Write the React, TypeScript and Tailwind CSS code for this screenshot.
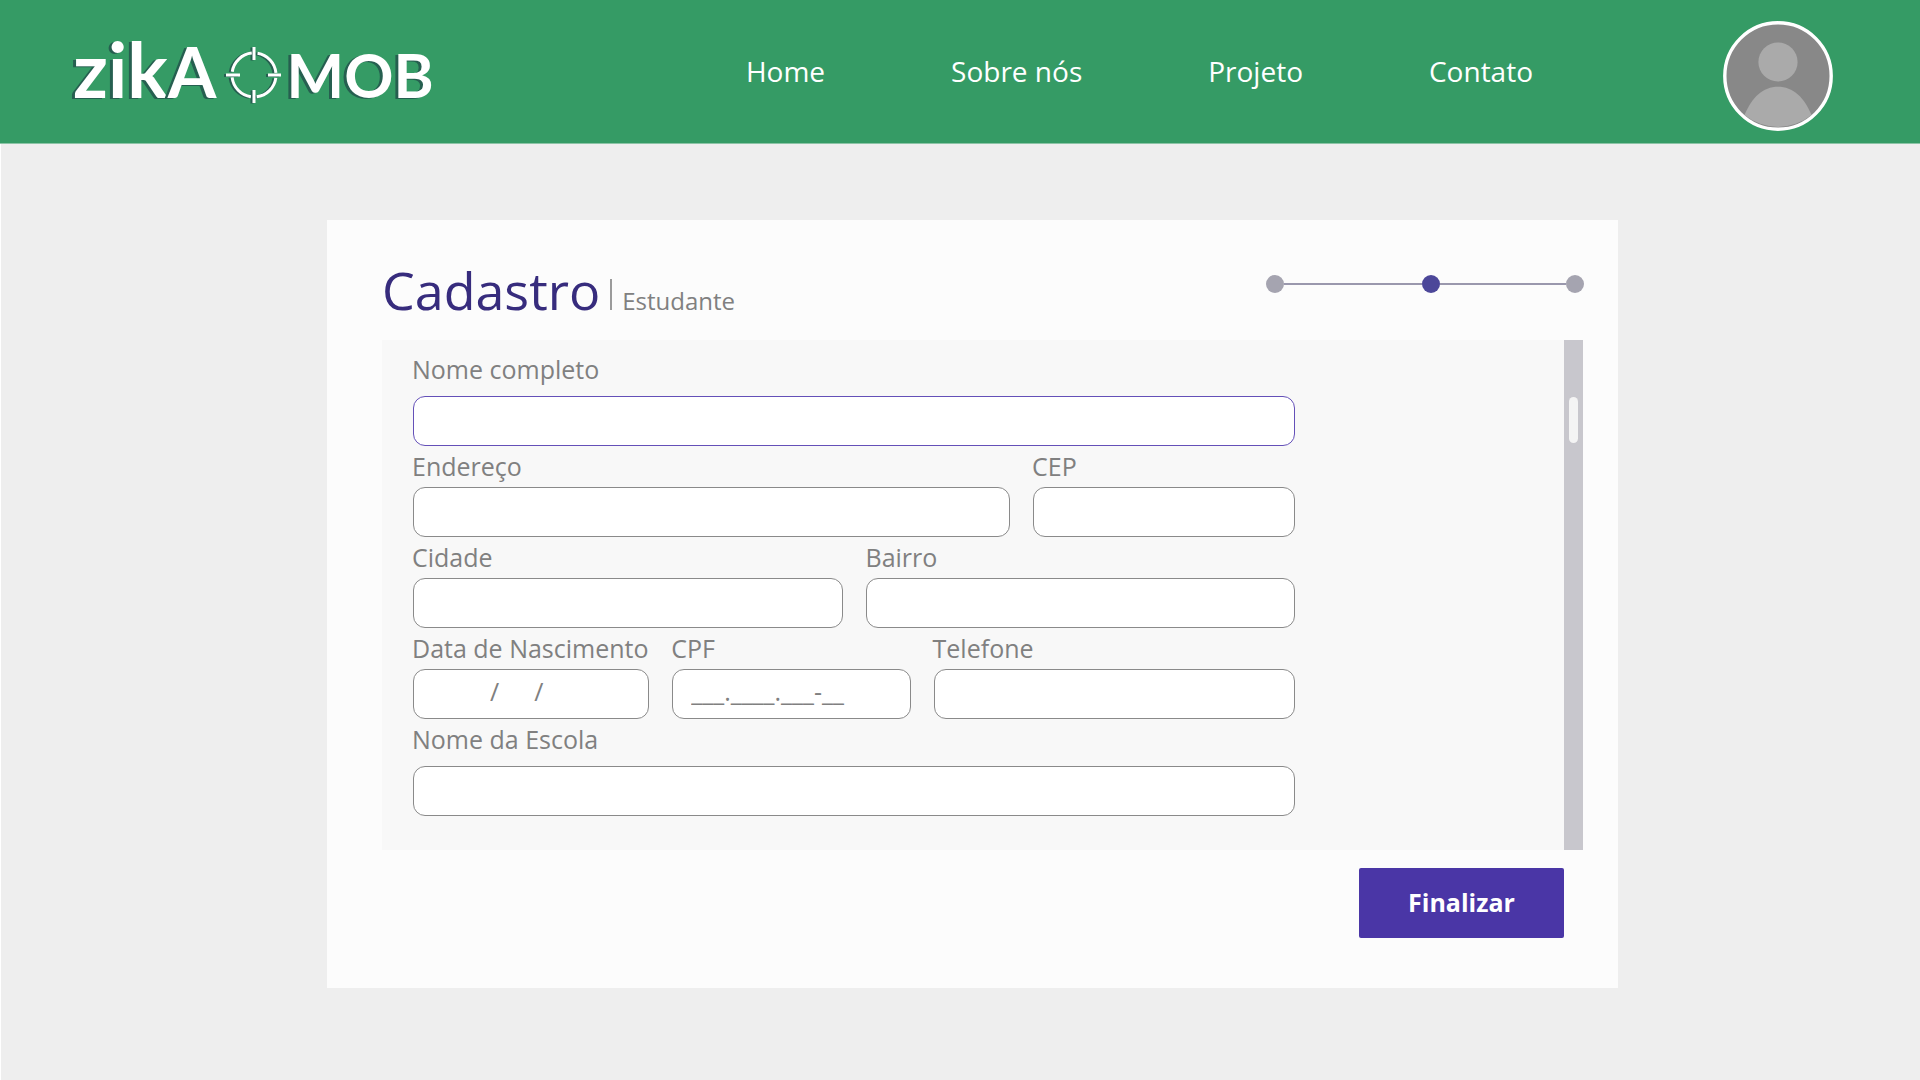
import React from "react";

const NAV_LINKS = ["Home", "Sobre nós", "Projeto", "Contato"];

function Crosshair() {
  const shape = (
    <>
      <circle cx="30" cy="30" r="22" strokeWidth="3" strokeDasharray="28.56 6" strokeDashoffset="-3" />
      <path d="M30 2V15M30 45V58M2 30H16M44 30H57" strokeWidth="3" />
    </>
  );
  return (
    <svg viewBox="0 0 60 60" className="mt-1.5 ml-2 h-15 w-15 shrink-0 self-center" fill="none" aria-hidden="true">
      <g stroke="#265f50" transform="translate(-2 0.5)">{shape}</g>
      <g stroke="#ffffff">{shape}</g>
    </svg>
  );
}

function Logo() {
  return (
    <a
      href="#"
      aria-label="zikA MOB"
      className="flex items-baseline font-['Lato',sans-serif] leading-[80px] font-bold text-white [text-shadow:-3px_1px_0_#265f50]"
    >
      <span className="text-[76px]">zik</span>
      <span className="text-[70px]">A</span>
      <Crosshair />
      <span className="ml-0.5 text-[61px]">MOB</span>
    </a>
  );
}

function Avatar() {
  return (
    <button type="button" aria-label="Perfil" className="mt-[9px] shrink-0 rounded-full">
      <svg viewBox="0 0 110 110" className="h-[110px] w-[110px]" aria-hidden="true">
        <circle cx="55" cy="55" r="53" fill="#888888" />
        <circle cx="55" cy="41" r="19.6" fill="#aaaaaa" />
        <path d="M21.5 94C29 76 40 65.700 55 65.700S81 76 88.500 94A53 53 0 0 1 21.500 94Z" fill="#aaaaaa" />
        <circle cx="55" cy="55" r="53.200" fill="none" stroke="#ffffff" strokeWidth="3.400" />
      </svg>
    </button>
  );
}

function Stepper() {
  return (
    <ol aria-label="Etapa 2 de 3" className="flex w-[318px] items-center">
      <li className="h-[18px] w-[18px] rounded-full bg-[#a5a4b0]" />
      <li aria-hidden="true" className="h-[2px] grow-[138] bg-[#9a98ad]" />
      <li aria-current="step" className="h-[18px] w-[18px] rounded-full bg-[#4c4799]" />
      <li aria-hidden="true" className="h-[2px] grow-[126] bg-[#9a98ad]" />
      <li className="h-[18px] w-[18px] rounded-full bg-[#a5a4b0]" />
    </ol>
  );
}

type FieldProps = {
  id: string;
  label: string;
  placeholder?: string;
  active?: boolean;
  spaced?: boolean;
  inset?: string;
};

function Field({ id, label, placeholder, active, spaced, inset = "px-[18px]" }: FieldProps) {
  return (
    <div className={`flex min-w-0 flex-col ${spaced ? "gap-[10px]" : "gap-1"}`}>
      <label htmlFor={id} className="-ml-px text-[25px] leading-[33px] whitespace-nowrap text-[#808080]">
        {label}
      </label>
      <input
        id={id}
        type="text"
        placeholder={placeholder}
        className={`h-[50px] w-full rounded-xl border bg-white pb-1.5 text-[25px] text-[#808080] outline-none placeholder:text-[#808080] placeholder:opacity-100 ${inset} ${
          active ? "border-[#6450b8]" : "border-[#8a8a8a]"
        }`}
      />
    </div>
  );
}

export default function App() {
  return (
    <div className="flex min-h-screen flex-col bg-[#eeeeee] font-['Open_Sans','Noto_Sans',sans-serif]">
      <header className="flex h-[144px] items-center border-b border-[#8cc4a6] bg-[#359b65] pr-[87px] pl-[73px]">
        <Logo />
        <nav className="ml-auto flex gap-[126px] pr-[190px] pb-0.5">
          {NAV_LINKS.map((name) => (
            <a key={name} href="#" className="text-[28px] leading-10 whitespace-nowrap text-white">
              {name}
            </a>
          ))}
        </nav>
        <Avatar />
      </header>

      <main className="flex grow items-start justify-center border-l border-white pt-[76px] pb-[92px] pl-6">
        <section className="w-full max-w-[1291px] bg-[#fcfcfc] pt-[32px] pr-[35px] pb-[50px] pl-[55px]">
          <div className="flex h-[88px] items-start justify-between">
            <div className="flex items-baseline">
              <h1 className="text-[52px] leading-[76px] text-[#372c7d]">Cadastro</h1>
              <span className="ml-[10px] inline-block h-[31px] w-[2px] bg-[#9b9b9b]" />
              <p className="ml-[10px] text-[24px] leading-[33px] text-[#808080]">Estudante</p>
            </div>
            <div className="-mr-px pt-[23px]">
              <Stepper />
            </div>
          </div>

          <form>
            <div className="flex">
              <div className="grow bg-[#f8f8f8] pt-[13px] pb-[34px] pl-[31px]">
                <div className="flex max-w-[882px] flex-col gap-1">
                  <Field id="nome" label="Nome completo" active spaced />
                  <div className="grid grid-cols-[597fr_262fr] gap-x-[23px]">
                    <Field id="endereco" label="Endereço" />
                    <Field id="cep" label="CEP" />
                  </div>
                  <div className="grid grid-cols-[431fr_429fr] gap-x-[23px]">
                    <Field id="cidade" label="Cidade" />
                    <Field id="bairro" label="Bairro" />
                  </div>
                  <div className="grid grid-cols-[236fr_238fr_361fr] gap-x-[23px]">
                    <Field
                      id="nascimento"
                      label="Data de Nascimento"
                      placeholder={"/\u00a0\u00a0\u00a0\u00a0\u00a0\u200a/"}
                      inset="px-[76px]"
                    />
                    <Field id="cpf" label="CPF" placeholder="___.____.___-__" />
                    <Field id="telefone" label="Telefone" />
                  </div>
                  <Field id="escola" label="Nome da Escola" spaced />
                </div>
              </div>
              <div className="w-[19px] shrink-0 bg-[#c8c7cd] px-[5px] pt-[57px]" aria-hidden="true">
                <div className="h-[46px] rounded-full bg-[#f4f4f4]" />
              </div>
            </div>

            <div className="flex justify-end pt-[18px] pr-[19px]">
              <button
                type="submit"
                className="h-[70px] w-[205px] rounded-[2px] bg-[#4a36a6] pb-0.5 text-[25px] leading-[36px] font-bold text-white"
              >
                Finalizar
              </button>
            </div>
          </form>
        </section>
      </main>
    </div>
  );
}
